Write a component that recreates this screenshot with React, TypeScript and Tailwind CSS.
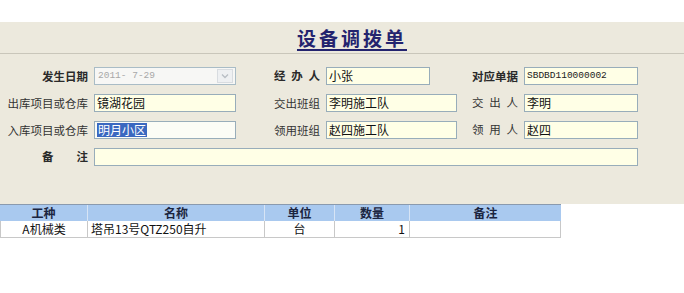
import React from 'react';

const cjk = '"Noto Sans CJK SC", "Liberation Sans", sans-serif';
const songti = '"Liberation Mono", "Noto Sans CJK SC", monospace';

const Label = ({ text, w, bold, spread }: { text: string; w: string; bold?: boolean; spread?: boolean }) => (
  <div className={`${w} flex shrink-0 justify-end pr-[6px]`}>
    {spread ? (
      <div className={`flex w-[46px] justify-between text-[11.5px] ${bold ? 'font-bold text-[#2a2a2a]' : 'text-[#333]'}`}>
        {text.split('').map((c, i) => (
          <span key={i}>{c}</span>
        ))}
      </div>
    ) : (
      <span className={`text-[11.5px] leading-[18px] ${bold ? 'font-bold text-[#2a2a2a]' : 'text-[#333]'}`}>{text}</span>
    )}
  </div>
);

const Field = ({ value, w, mono, selected }: { value?: string; w: string; mono?: boolean; selected?: boolean }) => (
  <div
    className={`${w} h-[18px] shrink-0 border border-[#98adba] ${selected ? 'bg-[#fbfcf6]' : 'bg-[#ffffe6]'} flex items-center pl-[2px] overflow-hidden`}
  >
    {value && (
      <span
        className={`leading-[14px] ${mono ? 'text-[9.5px] text-[#222]' : 'text-[12px] text-[#111]'} ${selected ? 'bg-[#3a68c0] text-white px-[1px]' : ''}`}
        style={mono ? { fontFamily: songti } : undefined}
      >
        {value}
      </span>
    )}
  </div>
);

export default function App() {
  const cols = [
    { name: '工种', w: 'w-[88px]' },
    { name: '名称', w: 'w-[177px]' },
    { name: '单位', w: 'w-[70px]' },
    { name: '数量', w: 'w-[75px]' },
    { name: '备注', w: 'w-[151px]' },
  ];

  return (
    <div className="w-[684px] h-[293px] bg-white overflow-hidden" style={{ fontFamily: cjk }}>
      <div className="h-[22px]" />
      <div className="h-[182px] bg-[#ece9dd]">
        <div className="h-[32px] border-b border-[#c9c6ba] flex items-end justify-center pb-[3px] pl-[20px]">
          <span className="text-[19px] font-bold text-[#23236e] tracking-[3px] underline underline-offset-[3px] decoration-[1.5px] leading-[24px]">
            设备调拨单
          </span>
        </div>

        <div className="pt-[13px] flex flex-col gap-[9px]">
          <div className="flex items-center h-[18px]">
            <Label text="发生日期" w="w-[94px]" bold />
            <div className="w-[142px] h-[18px] shrink-0 border border-[#a9bcc6] bg-[#f7f7f5] flex items-center justify-between pl-[3px] pr-[2px]">
              <span className="text-[9.5px] text-[#a8a8a8]" style={{ fontFamily: songti }}>2011- 7-29</span>
              <div className="w-[16px] h-[14px] border border-[#d8dce0] bg-[#eef0f2] flex items-center justify-center">
                <svg width="8" height="6" viewBox="0 0 8 6">
                  <path d="M1 1.5 L4 4.5 L7 1.5" stroke="#b8bec4" strokeWidth="1.3" fill="none" />
                </svg>
              </div>
            </div>
            <Label text="经办人" w="w-[90px]" bold spread />
            <div className="w-[131px] shrink-0">
              <Field value="小张" w="w-[104px]" />
            </div>
            <Label text="对应单据" w="w-[67px]" bold />
            <Field value="SBDBD110000002" w="w-[114px]" mono />
          </div>

          <div className="flex items-center h-[18px]">
            <Label text="出库项目或仓库" w="w-[94px]" />
            <Field value="镜湖花园" w="w-[142px]" />
            <Label text="交出班组" w="w-[90px]" />
            <Field value="李明施工队" w="w-[131px]" />
            <Label text="交出人" w="w-[67px]" spread />
            <Field value="李明" w="w-[114px]" />
          </div>

          <div className="flex items-center h-[18px]">
            <Label text="入库项目或仓库" w="w-[94px]" />
            <Field value="明月小区" w="w-[142px]" selected />
            <Label text="领用班组" w="w-[90px]" />
            <Field value="赵四施工队" w="w-[131px]" />
            <Label text="领用人" w="w-[67px]" spread />
            <Field value="赵四" w="w-[114px]" />
          </div>

          <div className="flex items-center h-[18px]">
            <Label text="备注" w="w-[94px]" bold spread />
            <Field w="w-[544px]" />
          </div>
        </div>
      </div>

      <div className="w-[561px]">
        <div className="flex h-[17px] bg-[#a9c9ef] border-t border-[#8a9aae]">
          {cols.map((c, i) => (
            <div
              key={c.name}
              className={`${c.w} flex items-center justify-center text-[12px] font-bold text-[#1b2540] ${i < cols.length - 1 ? 'border-r border-[#d7e4f5]' : ''}`}
            >
              {c.name}
            </div>
          ))}
        </div>
        <div className="flex h-[17px] bg-white border-b border-x border-[#c8c8c8] text-[12px] text-[#111]">
          <div className="w-[87px] border-r border-[#c8c8c8] flex items-center justify-center">A机械类</div>
          <div className="w-[177px] border-r border-[#c8c8c8] flex items-center pl-[3px]">塔吊13号QTZ250自升</div>
          <div className="w-[70px] border-r border-[#c8c8c8] flex items-center justify-center">台</div>
          <div className="w-[75px] border-r border-[#c8c8c8] flex items-center justify-end pr-[4px]">1</div>
          <div className="flex-1" />
        </div>
      </div>
    </div>
  );
}
